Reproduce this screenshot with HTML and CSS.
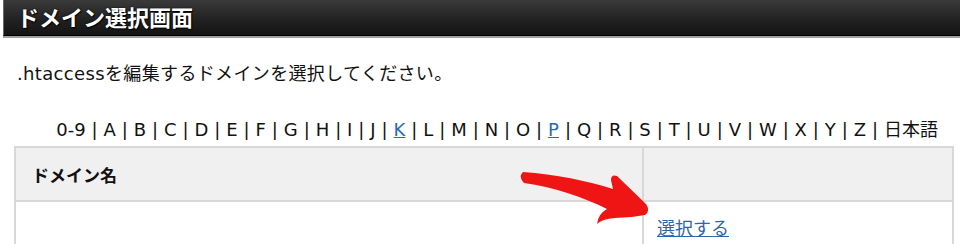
FILE: index.html
```html
<!DOCTYPE html>
<html lang="ja">
<head>
    <meta charset="UTF-8">
    <meta name="viewport" content="width=device-width, initial-scale=1.0">
    <title>ドメイン選択画面</title>
    <link rel="stylesheet" href="styles.css">
</head>
<body>
    <h1 class="titlebar">ドメイン選択画面</h1>

    <p class="lead">.htaccessを編集するドメインを選択してください。</p>

    <nav class="index-nav">
        0-9 | A | B | C | D | E | F | G | H | I | J | <a href="#">K</a> | L | M | N | O | <a href="#">P</a> | Q | R | S | T | U | V | W | X | Y | Z | 日本語
    </nav>

    <table class="domain-table">
        <thead>
            <tr>
                <th class="col-name">ドメイン名</th>
                <th class="col-action"></th>
            </tr>
        </thead>
        <tbody>
            <tr>
                <td class="col-name"></td>
                <td class="col-action"><a href="#">選択する</a></td>
            </tr>
        </tbody>
    </table>

    <!-- red pointer arrow drawn over the table -->
    <svg class="pointer" width="960" height="244" viewBox="0 0 960 244">
        <path d="M 523 172
                 C 555 174, 588 181, 613 189
                 L 611 180
                 Q 611 174 617 176
                 L 646 204
                 Q 651 211 645 215
                 Q 630 218 615 218
                 Q 602 219 597 224
                 Q 598 214 607 209
                 C 583 197, 553 187, 524 183
                 Q 518 177 523 172 Z" fill="#f01515"/>
    </svg>
</body>
</html>
```

FILE: styles.css
```css
html, body {
    overflow: hidden;
}
body {
    margin: 0;
    width: 960px;
    height: 244px;
    position: relative;
    font-family: "DejaVu Sans", Verdana, "Noto Sans CJK JP", sans-serif;
    color: #111;
    background: #fff;
}
.titlebar {
    margin: 0 0 0 3px;
    height: 35px;
    padding-left: 13px;
    font-family: "Noto Sans CJK JP", sans-serif;
    font-size: 22px;
    font-weight: bold;
    line-height: 33px;
    color: #fff;
    text-shadow: 0 0 2px #000, 1px 1px 1px #000;
    background: linear-gradient(#3a3a3a, #222 55%, #141414);
    border-left: 1px solid #6a6a6a;
    border-bottom: 1px solid #000;
    box-shadow: 0 2px 0 #a0a0a0;
}
.lead {
    margin: 26px 0 0;
    padding-left: 17px;
    font-size: 18px;
    line-height: 24px;
    letter-spacing: 0.35px;
}
.index-nav {
    margin-top: 32px;
    padding-right: 22px;
    text-align: right;
    font-size: 18px;
    line-height: 24px;
    word-spacing: 0.2px;
    white-space: nowrap;
}
.index-nav a {
    color: #2f68b0;
}
.domain-table {
    margin: 4px 0 0 14px;
    width: 940px;
    table-layout: fixed;
    border-collapse: collapse;
    font-size: 18px;
}
.domain-table th,
.domain-table td {
    border: 2px solid #d8d8d8;
    height: 50px;
    text-align: left;
    vertical-align: middle;
}
.domain-table thead th {
    height: 52px;
    background: #f0f0f0;
    font-family: "Noto Sans CJK JP", sans-serif;
    font-weight: bold;
    font-size: 17px;
}
.col-name {
    width: 594px;
    padding: 0 16px;
}
.col-action {
    padding: 0 13px;
}
.col-action a {
    color: #2f64a8;
    font-family: "Noto Sans CJK JP", sans-serif;
}
.pointer {
    position: absolute;
    left: 0;
    top: 0;
}
```
